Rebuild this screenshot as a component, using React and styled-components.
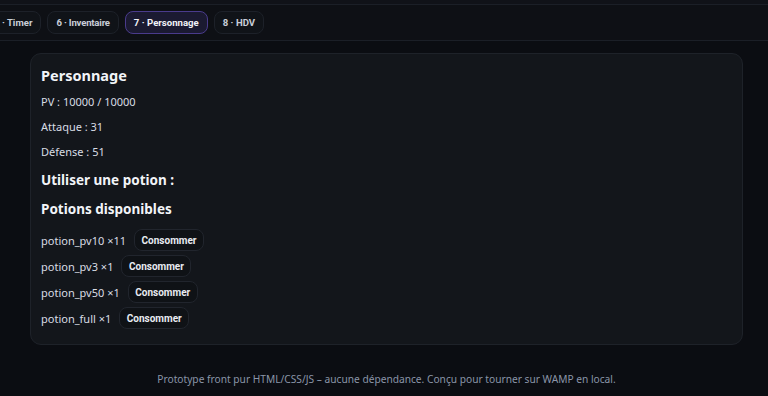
import React from "react";
import styled, { createGlobalStyle } from "styled-components";

const Global = createGlobalStyle`
  html, body { margin: 0; padding: 0; background: #0b0d12; }
  body { font-family: "Noto Sans", "Open Sans", sans-serif; color: #e6e9ef; }
  * { box-sizing: border-box; }
`;

const Page = styled.div`
  width: 768px;
  height: 396px;
  background: #0b0d12;
  display: flex;
  flex-direction: column;
  overflow: hidden;
`;

const TopStrip = styled.div`
  height: 5px;
  background: #101218;
  border-bottom: 1px solid #1b1f27;
`;

const Nav = styled.nav`
  height: 36px;
  background: #0e1015;
  border-bottom: 1px solid #1b1f27;
  display: flex;
  align-items: center;
  gap: 6px;
  overflow: hidden;
`;

const Tab = styled.button`
  flex: none;
  height: 23px;
  padding: 0 8px;
  border-radius: 8px;
  border: 1px solid ${(p) => (p.$active ? "#4a3b8c" : "#1d2129")};
  background: ${(p) => (p.$active ? "#1b1a31" : "#101318")};
  color: ${(p) => (p.$active ? "#f1f2f8" : "#c9ced8")};
  font-family: Roboto, "Liberation Sans", Arial, sans-serif;
  font-weight: 700;
  font-size: 9.6px;
  letter-spacing: ${(p) => p.$tight ? "-0.2px" : "0"};
  margin-left: ${(p) => p.$offset || 0};
`;

const Main = styled.main`
  padding: 12px 25px 0 30px;
`;

const Card = styled.section`
  background: #13161b;
  border: 1px solid #1e2229;
  border-radius: 11px;
  padding: 11px 10px 15px;
  height: 292px;
`;

const Title = styled.h2`
  margin: 0;
  font-size: 14.5px;
  font-weight: 700;
  line-height: 20px;
  color: #f2f4f8;
`;

const Stat = styled.p`
  margin: 0;
  font-size: 11px;
  line-height: 25px;
  color: #d8dce4;
`;

const StatList = styled.div`
  margin-top: 4px;
  display: flex;
  flex-direction: column;
`;

const SubTitle = styled.h3`
  margin: ${(p) => p.$mt || "0"} 0 0;
  font-size: 13.5px;
  font-weight: 700;
  line-height: 20px;
  color: #f2f4f8;
`;

const Rows = styled.div`
  margin-top: 10px;
  display: flex;
  flex-direction: column;
  gap: 4px;
`;

const Row = styled.div`
  display: flex;
  align-items: center;
  gap: 8px;
  height: 22px;
  font-size: 11px;
  color: #d8dce4;
`;

const ConsumeButton = styled.button`
  height: 22px;
  width: 70px;
  padding: 0;
  border-radius: 8px;
  border: 1px solid #21252d;
  background: #0f1216;
  color: #e8ebf1;
  font-family: Roboto, "Liberation Sans", Arial, sans-serif;
  font-weight: 700;
  font-size: 10px;
`;

const Footer = styled.footer`
  margin-top: 27px;
  text-align: center;
  font-size: 10.2px;
  color: #8a95a8;
  padding-left: 5px;
`;

const tabs = [
  { label: "5 · Timer", offset: "-15px" },
  { label: "6 · Inventaire", tight: true },
  { label: "7 · Personnage", active: true },
  { label: "8 · HDV" },
];

const potions = [
  ["potion_pv10", 11],
  ["potion_pv3", 1],
  ["potion_pv50", 1],
  ["potion_full", 1],
];

export default function App() {
  return (
    <Page>
      <Global />
      <TopStrip />
      <Nav>
        {tabs.map((t) => (
          <Tab key={t.label} $active={t.active} $offset={t.offset} $tight={t.tight}>
            {t.label}
          </Tab>
        ))}
      </Nav>
      <Main>
        <Card>
          <Title>Personnage</Title>
          <StatList>
            <Stat>PV : 10000 / 10000</Stat>
            <Stat>Attaque : 31</Stat>
            <Stat>Défense : 51</Stat>
          </StatList>
          <SubTitle $mt="6px">Utiliser une potion :</SubTitle>
          <SubTitle $mt="9px">Potions disponibles</SubTitle>
          <Rows>
            {potions.map(([name, n]) => (
              <Row key={name}>
                <span>
                  {name} ×{n}
                </span>
                <ConsumeButton>Consommer</ConsumeButton>
              </Row>
            ))}
          </Rows>
        </Card>
      </Main>
      <Footer>
        Prototype front pur HTML/CSS/JS – aucune dépendance. Conçu pour tourner sur WAMP en local.
      </Footer>
    </Page>
  );
}
